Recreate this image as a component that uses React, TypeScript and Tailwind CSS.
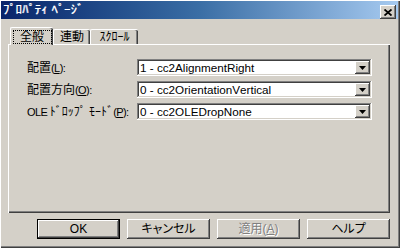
import type { ReactNode } from "react";

const raised =
  "shadow-[inset_-1px_-1px_#404040,inset_1px_1px_#ffffff,inset_-2px_-2px_#808080,inset_2px_2px_#d4d0c8]";
const sunken =
  "shadow-[inset_-1px_-1px_#ffffff,inset_1px_1px_#808080,inset_-2px_-2px_#d4d0c8,inset_2px_2px_#404040]";

// half-width kana: give the voiced marks their own cell
function Kana({ text, cell }: { text: string; cell: string }) {
  return (
    <>
      {text.split("").map((c, i) =>
        c === "ﾞ" || c === "ﾟ" ? (
          <span key={i} className={`inline-block ${cell}`}>
            {c}
          </span>
        ) : (
          <span key={i}>{c}</span>
        )
      )}
    </>
  );
}

// narrow latin, like the old UI font
function N({ children }: { children: ReactNode }) {
  return <span className="text-[11px] tracking-[-0.6px]">{children}</span>;
}

function Combo({ value }: { value: string }) {
  return (
    <div className={`w-[235px] h-[17px] bg-white flex items-center p-[2px] ${sunken}`}>
      <span className="flex-1 pl-[1px] text-[11.7px] leading-none text-black whitespace-nowrap">{value}</span>
      <div className={`w-[15px] h-full bg-[#d4d0c8] flex items-center justify-center ${raised}`}>
        <svg width="7" height="4" viewBox="0 0 7 4">
          <path d="M0 0h7L3.5 4z" fill="#000" />
        </svg>
      </div>
    </div>
  );
}

function Row({ label, value }: { label: ReactNode; value: string }) {
  return (
    <div className="flex items-center h-[17px]">
      <span className="w-[110px] text-[12px] leading-none text-black whitespace-nowrap">{label}</span>
      <Combo value={value} />
    </div>
  );
}

function Btn({ children, isDefault }: { children: ReactNode; isDefault?: boolean }) {
  return (
    <div
      className={`w-[83px] h-[20px] flex items-center justify-center text-[12px] leading-none text-black [font-feature-settings:'palt'] ${
        isDefault
          ? "border border-black shadow-[inset_-1px_-1px_#404040,inset_1px_1px_#ffffff,inset_-2px_-2px_#808080]"
          : raised
      }`}
    >
      {children}
    </div>
  );
}

export default function App() {
  return (
    <div
      className="w-[400px] h-[248px] bg-[#d4d0c8] flex flex-col p-[1px] pr-[2px] pb-[2px] shadow-[inset_1px_1px_#ffffff,inset_-1px_-1px_#404040,inset_-2px_-2px_#808080] font-['Liberation_Sans','Noto_Sans_CJK_JP',sans-serif] [font-kerning:none]"
    >
      {/* title bar */}
      <div className="h-[18px] flex justify-between pl-[2px] pr-[2px] bg-gradient-to-r from-[#0a246a] via-[#3a6ea5] to-[#a6caf0]">
        <span className="self-center text-white text-[12px] leading-none tracking-[0.5px] [text-shadow:0.6px_0_#ffffff] whitespace-nowrap">
          <Kana text="ﾌﾟﾛﾊﾟﾃｨ ﾍﾟｰｼﾞ" cell="w-[6px]" />
        </span>
        <div className={`self-start mt-[4px] w-[16px] h-[14px] bg-[#d4d0c8] flex items-center justify-center ${raised}`}>
          <svg width="8" height="7" viewBox="0 0 8 7">
            <path d="M0.5 0.5L7.5 6.5M7.5 0.5L0.5 6.5" stroke="#000" strokeWidth="1.8" />
          </svg>
        </div>
      </div>

      <div className="flex flex-col ml-[7px] mr-[8px] pt-[8px]">
        {/* tabs */}
        <div className="h-[17px] flex items-end pl-[2px] text-[12px] leading-none text-black">
          <div className="relative z-10 self-start h-[18px] w-[43px] bg-[#d4d0c8] rounded-t-[2px] border-t border-l border-white shadow-[inset_-1px_0_#404040,inset_-2px_0_#808080] flex items-center justify-center">
            <span className="w-[39px] h-[14px] mt-[1px] border border-dotted border-black flex items-center justify-center">
              全般
            </span>
          </div>
          <div className="h-[15px] w-[37px] rounded-t-[2px] border-t border-l border-white shadow-[inset_-1px_0_#404040,inset_-2px_0_#808080] flex items-center justify-center">
            連動
          </div>
          <div className="h-[15px] w-[48px] rounded-t-[2px] border-t border-l border-white shadow-[inset_-1px_0_#404040,inset_-2px_0_#808080] flex items-center justify-center">
            ｽｸﾛｰﾙ
          </div>
        </div>

        {/* panel */}
        <div className="relative h-[169px] border-t border-l border-white shadow-[inset_-1px_-1px_#404040,inset_-2px_-2px_#808080] flex flex-col gap-[5px] pt-[14px] pl-[18px]">
          <Row
            label={
              <>
                配置<N>(<span className="underline">L</span>):</N>
              </>
            }
            value="1 - cc2AlignmentRight"
          />
          <Row
            label={
              <>
                配置方向<N>(<span className="underline">O</span>):</N>
              </>
            }
            value="0 - cc2OrientationVertical"
          />
          <Row
            label={
              <>
                <N>OLE </N>
                <Kana text="ﾄﾞﾛｯﾌﾟ ﾓｰﾄﾞ" cell="w-[6px]" />
                <N>(<span className="underline">P</span>):</N>
              </>
            }
            value="0 - cc2OLEDropNone"
          />
        </div>
      </div>

      {/* buttons */}
      <div className="flex gap-[7px] mt-[6px] ml-[36px]">
        <Btn isDefault>OK</Btn>
        <Btn>キャンセル</Btn>
        <Btn>
          <span className="text-[#808080] [text-shadow:1px_1px_#ffffff]">
            適用(<span className="underline">A</span>)
          </span>
        </Btn>
        <Btn>ヘルプ</Btn>
      </div>
    </div>
  );
}
